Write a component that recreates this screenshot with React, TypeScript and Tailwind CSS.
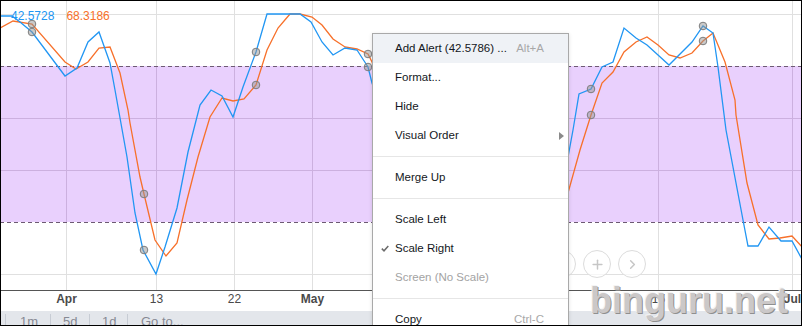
import React from 'react'
import { Plus, ChevronRight, Minus } from 'lucide-react'

type Pt = [number, number]

const blue: Pt[] = [
  [0, 16], [12, 16], [20, 22], [32, 32], [65, 76], [77, 68], [88, 42], [99, 32], [110, 63],
  [115, 90], [127, 157], [135, 213], [143, 250], [156, 274], [165, 247], [177, 208], [188, 152],
  [200, 105], [211, 90], [222, 96], [233, 117], [243, 87], [256, 52], [267, 14], [300, 14],
  [311, 22], [322, 42], [333, 55], [345, 48], [357, 50], [368, 67], [372, 83], [400, 160],
  [430, 220], [460, 230], [500, 200], [540, 190], [568, 157], [573, 130], [579, 94], [591, 89],
  [602, 67], [613, 62], [624, 28], [636, 38], [647, 45], [658, 55], [669, 65], [692, 42],
  [703, 26], [713, 33], [718, 67], [726, 130], [743, 220], [748, 246], [758, 246], [769, 227],
  [781, 241], [792, 241], [803, 261],
]

const orange: Pt[] = [
  [0, 28], [13, 21], [32, 24], [65, 62], [76, 69], [88, 62], [99, 48], [110, 47], [120, 73],
  [128, 110], [130, 123], [140, 177], [144, 194], [155, 240], [166, 256], [177, 243], [187, 200],
  [198, 157], [210, 117], [222, 98], [233, 101], [244, 99], [256, 85], [267, 50], [278, 28],
  [290, 14], [300, 14], [312, 17], [322, 25], [333, 39], [345, 47], [357, 49], [368, 54],
  [372, 62], [400, 150], [430, 220], [470, 240], [510, 230], [545, 215], [568, 193], [580, 150],
  [591, 115], [602, 83], [613, 72], [624, 52], [636, 42], [647, 37], [658, 45], [669, 55],
  [680, 58], [692, 53], [703, 41], [713, 33], [725, 62], [735, 100], [736, 115], [747, 183],
  [758, 225], [769, 239], [780, 238], [792, 236], [803, 248],
]

const markers: Pt[] = [
  [32, 24], [32, 32], [144, 194], [144, 250], [256, 52], [256, 85],
  [368, 54], [368, 67], [591, 89], [591, 115], [703, 26], [703, 41],
]

const vLines = [66, 156, 234, 312, 658, 792]
const hLines = [14, 118, 170, 274]

const ticks = [
  { x: 66, label: 'Apr', bold: true },
  { x: 156, label: '13' },
  { x: 234, label: '22' },
  { x: 312, label: 'May', bold: true },
  { x: 658, label: '15' },
  { x: 792, label: 'Jul', bold: true },
]

const toPath = (pts: Pt[]) => pts.map((p) => p.join(',')).join(' ')

function Chart() {
  return (
    <svg width="800" height="310" viewBox="1 1 800 310" className="block">
      <rect x="0" y="66" width="802" height="156" fill="#e9d0fd" />
      {hLines.map((y) => (
        <line key={y} x1="0" x2="802" y1={y + 0.5} y2={y + 0.5} stroke={y > 66 && y < 222 ? '#ccb0df' : '#e0e0e0'} />
      ))}
      {vLines.map((x) => (
        <g key={x}>
          <line x1={x + 0.5} x2={x + 0.5} y1="0" y2="290" stroke="#e0e0e0" />
          <line x1={x + 0.5} x2={x + 0.5} y1="66" y2="222" stroke="#ccb0df" />
        </g>
      ))}
      <line x1="0" x2="802" y1="66.5" y2="66.5" stroke="#6d5a73" strokeDasharray="4 3" />
      <line x1="0" x2="802" y1="222.5" y2="222.5" stroke="#6d5a73" strokeDasharray="4 3" />
      <line x1="0" x2="802" y1="290.5" y2="290.5" stroke="#555" />
      <polyline points={toPath(orange)} fill="none" stroke="#f7702a" strokeWidth="1.3" />
      <polyline points={toPath(blue)} fill="none" stroke="#2196f3" strokeWidth="1.3" />
      {markers.map(([x, y], i) => (
        <circle key={i} cx={x} cy={y} r="3.8" fill="rgba(150,150,150,0.5)" stroke="#7d7d7d" strokeWidth="1" />
      ))}
      {ticks.map((t) => (
        <text
          key={t.x}
          x={t.x + 0.5}
          y="303"
          textAnchor="middle"
          fontFamily="'Liberation Sans', Arial, sans-serif"
          fontSize="12"
          fontWeight={t.bold ? 700 : 400}
          fill="#4a4a4a"
        >
          {t.label}
        </text>
      ))}
    </svg>
  )
}

function MenuItem({
  label,
  shortcut,
  active,
  disabled,
  checked,
  submenu,
}: {
  label: string
  shortcut?: string
  active?: boolean
  disabled?: boolean
  checked?: boolean
  submenu?: boolean
}) {
  return (
    <div
      className={`relative h-[29px] flex items-center justify-between pl-[22px] pr-[24px] ${
        active ? 'bg-[#eff2f6]' : ''
      } ${disabled ? 'text-[#a3a3a3]' : 'text-[#131722]'}`}
    >
      {checked && (
        <svg className="absolute left-[8px] top-[11px]" width="8" height="7" viewBox="0 0 8 7">
          <path d="M0.8 3.6 L3 5.8 L7.3 1" fill="none" stroke="#6b6b6b" strokeWidth="1.5" />
        </svg>
      )}
      <span>{label}</span>
      {shortcut && <span className="text-[#a8a8a8]">{shortcut}</span>}
      {submenu && (
        <svg className="absolute right-[4px] top-[11px]" width="5" height="8" viewBox="0 0 5 8">
          <path d="M0 0 L5 4 L0 8 Z" fill="#8a8a8a" />
        </svg>
      )}
    </div>
  )
}

function Separator() {
  return (
    <div className="h-[13px] flex items-center">
      <div className="h-px w-full bg-[#e6e6e6]" />
    </div>
  )
}

export default function App() {
  return (
    <div className="w-[802px] h-[326px] border border-black bg-white relative overflow-hidden font-['Liberation_Sans',Arial,sans-serif]">
      <div className="flex flex-col">
        <Chart />
        <div className="h-[14px] bg-[#e3e6eb] flex text-[13px] leading-none text-[#868993] overflow-hidden">
          <div className="ml-[4px] mt-[3px] w-[45px] border-l border-[#c7ccd4] pl-[14px] pt-[1px]">1m</div>
          <div className="mt-[3px] w-[39px] border-l border-[#c7ccd4] pl-[12px] pt-[1px]">5d</div>
          <div className="mt-[3px] w-[38px] border-l border-[#c7ccd4] pl-[12px] pt-[1px]">1d</div>
          <div className="mt-[3px] border-l border-[#c7ccd4] pl-[13px] pt-[1px]">Go to...</div>
        </div>
      </div>

      <div className="absolute left-[10px] top-[9px] flex gap-[12px] text-[12px] leading-none">
        <span className="text-[#2196f3]">42.5728</span>
        <span className="text-[#f7702a]">68.3186</span>
      </div>

      <div className="absolute left-[547px] top-[249px] flex gap-[7px]">
        {[Minus, Plus, ChevronRight].map((Icon, i) => (
          <div key={i} className="w-[28px] h-[28px] rounded-full border border-[#dcdcdc] bg-white/70 flex items-center justify-center">
            <Icon size={15} strokeWidth={2.4} color="#c6c6c6" />
          </div>
        ))}
      </div>

      <div className="absolute left-[589px] top-[282px] text-[36px] leading-none font-bold text-[#cbc8c8] [text-shadow:1px_1px_0_#8f8f8f,-1px_-1px_0_#f4f4f4]">
        binguru.net
      </div>

      <div className="absolute left-[371px] top-[32px] w-[197px] h-[320px] bg-white border border-[#a9a9a9] shadow-[0_1px_4px_rgba(0,0,0,0.12)] text-[11.5px]">
        <MenuItem label="Add Alert (42.5786) ..." shortcut="Alt+A" active />
        <MenuItem label="Format..." />
        <MenuItem label="Hide" />
        <MenuItem label="Visual Order" submenu />
        <Separator />
        <MenuItem label="Merge Up" />
        <Separator />
        <MenuItem label="Scale Left" />
        <MenuItem label="Scale Right" checked />
        <MenuItem label="Screen (No Scale)" disabled />
        <Separator />
        <MenuItem label="Copy" shortcut="Ctrl-C" />
      </div>
    </div>
  )
}
